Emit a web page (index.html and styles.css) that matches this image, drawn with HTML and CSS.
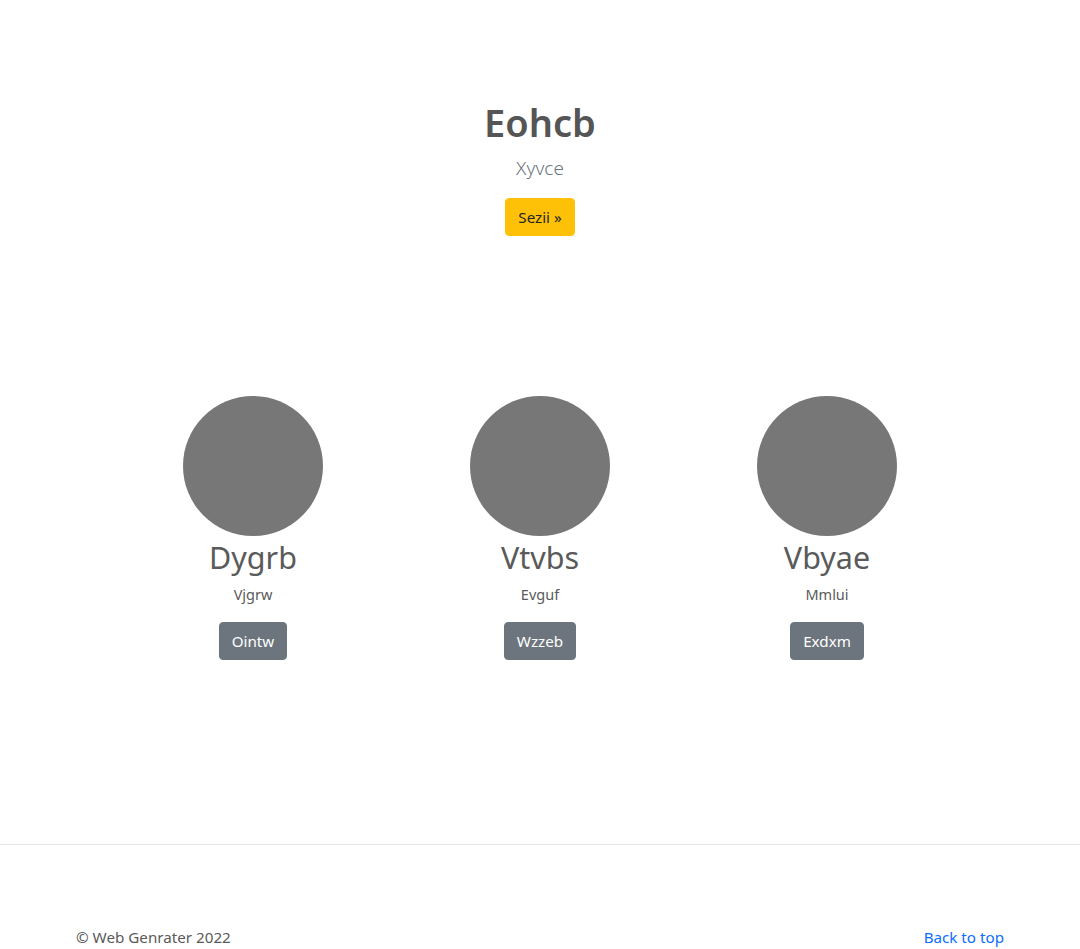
FILE: index.html
```html
<!DOCTYPE html>
<html lang="en">
<head>
<meta charset="utf-8">
<title>Eohcb</title>
<link rel="stylesheet" href="styles.css">
</head>
<body>
<main>
  <section class="hero">
    <h1 class="hero-title">Eohcb</h1>
    <p class="hero-lead">Xyvce</p>
    <a class="btn btn-warning" href="#">Sezii »</a>
  </section>

  <section class="features">
    <div class="feature">
      <div class="avatar"></div>
      <h2 class="feature-title">Dygrb</h2>
      <p class="feature-text">Vjgrw</p>
      <a class="btn btn-secondary" href="#">Ointw</a>
    </div>
    <div class="feature">
      <div class="avatar"></div>
      <h2 class="feature-title">Vtvbs</h2>
      <p class="feature-text">Evguf</p>
      <a class="btn btn-secondary" href="#">Wzzeb</a>
    </div>
    <div class="feature">
      <div class="avatar"></div>
      <h2 class="feature-title">Vbyae</h2>
      <p class="feature-text">Mmlui</p>
      <a class="btn btn-secondary" href="#">Exdxm</a>
    </div>
  </section>
</main>

<footer class="footer">
  <div class="footer-inner">
    <p class="copyright">© Web Genrater 2022</p>
    <a class="back-top" href="#">Back to top</a>
  </div>
</footer>
</body>
</html>
```

FILE: styles.css
```css
* { box-sizing: border-box; }

html, body {
  margin: 0;
  padding: 0;
  background: #fff;
}

body {
  font-family: "Noto Sans", "Open Sans", Arial, sans-serif;
  font-size: 15.2px;
  line-height: 24px;
  color: #5a5a5a;
}

.hero {
  display: flex;
  flex-direction: column;
  align-items: center;
  padding-top: 98px;
}

.hero-title {
  margin: 0 0 7px;
  font-size: 38px;
  line-height: 48px;
  font-weight: 600;
  color: #555;
}

.hero-lead {
  margin: 0 0 15px;
  font-size: 19px;
  line-height: 30px;
  font-weight: 300;
  color: #6c757d;
}

.btn {
  display: inline-block;
  padding: 6px 12px;
  font-size: 15.2px;
  line-height: 24px;
  border-radius: 4px;
  text-decoration: none;
  border: 1px solid transparent;
}

.btn-warning {
  background: #ffc107;
  border-color: #ffc107;
  color: #212529;
}

.btn-secondary {
  background: #6c757d;
  border-color: #6c757d;
  color: #fff;
}

.features {
  display: grid;
  grid-template-columns: repeat(3, 287px);
  justify-content: center;
  margin-top: 160px;
}

.feature {
  display: flex;
  flex-direction: column;
  align-items: center;
}

.avatar {
  width: 140px;
  height: 140px;
  border-radius: 50%;
  background: #777;
}

.feature-title {
  margin: 2px 0 6px;
  font-size: 30.5px;
  line-height: 38px;
  font-weight: 400;
  color: #5a5a5a;
}

.feature-text {
  margin: 0 0 16px;
  font-size: 14.5px;
  line-height: 24px;
}

.footer {
  margin-top: 184px;
  border-top: 1px solid #e5e5e5;
  padding-top: 80px;
}

.footer-inner {
  display: flex;
  justify-content: space-between;
  align-items: center;
  max-width: 960px;
  margin: 0 auto;
  padding: 0 16px;
}

.copyright {
  margin: 0;
  color: #5a5a5a;
}

.back-top {
  color: #0d6efd;
  text-decoration: none;
}
```
